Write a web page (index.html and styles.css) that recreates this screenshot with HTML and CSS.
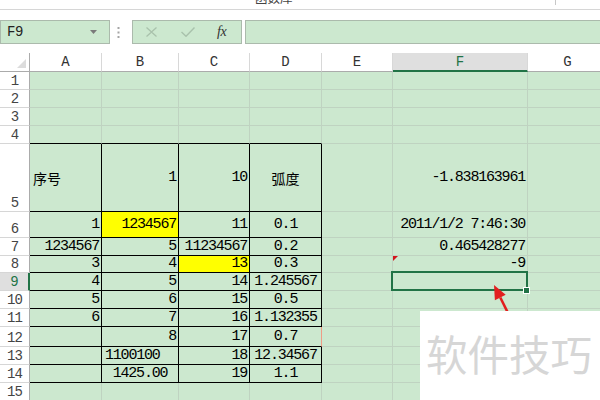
FILE: index.html
```html
<!DOCTYPE html>
<html lang="zh">
<head>
<meta charset="utf-8">
<title>Sheet</title>
<link rel="stylesheet" href="styles.css">
</head>
<body>
<div class="app">
  <div class="ribbon">
    <span class="grp-label">函数库</span>
    <span class="grp-sep"></span>
  </div>
  <div class="fbar">
    <div class="namebox">
      <span class="name">F9</span>
      <svg class="dd" width="7" height="4" viewBox="0 0 7 4"><path d="M0 0H7L3.5 4Z" fill="#7a7a7a"/></svg>
    </div>
    <svg class="dots" width="3" height="11" viewBox="0 0 3 11"><rect x="0.5" y="0" width="2" height="2" fill="#a5a5a5"/><rect x="0.5" y="4.5" width="2" height="2" fill="#a5a5a5"/><rect x="0.5" y="9" width="2" height="2" fill="#a5a5a5"/></svg>
    <div class="fbtns">
      <svg class="x-ic" width="11" height="10" viewBox="0 0 11 10"><path d="M0.5 0.5L10.5 9.5M10.5 0.5L0.5 9.5" stroke="#a9c2ac" stroke-width="1.3" fill="none"/></svg>
      <svg class="ok-ic" width="14" height="10" viewBox="0 0 14 10"><path d="M0.5 5L5 9.3L13.5 0.5" stroke="#a9c2ac" stroke-width="1.4" fill="none"/></svg>
      <span class="fx">fx</span>
    </div>
    <div class="finput"></div>
  </div>
  <div class="sheet">
    <!-- header -->
    <div class="corner"></div>
    <div class="ch">A</div><div class="ch">B</div><div class="ch">C</div><div class="ch">D</div><div class="ch">E</div><div class="ch sel">F</div><div class="ch">G</div>
    <!-- row 1 -->
    <div class="rh">1</div><div class="c"></div><div class="c"></div><div class="c"></div><div class="c"></div><div class="c"></div><div class="c"></div><div class="c"></div>
    <!-- row 2 -->
    <div class="rh">2</div><div class="c"></div><div class="c"></div><div class="c"></div><div class="c"></div><div class="c"></div><div class="c"></div><div class="c"></div>
    <!-- row 3 -->
    <div class="rh">3</div><div class="c"></div><div class="c"></div><div class="c"></div><div class="c"></div><div class="c"></div><div class="c"></div><div class="c"></div>
    <!-- row 4 -->
    <div class="rh">4</div><div class="c tb"></div><div class="c tb"></div><div class="c tb"></div><div class="c tb"></div><div class="c"></div><div class="c"></div><div class="c"></div>
    <!-- row 5 -->
    <div class="rh">5</div>
    <div class="c t l cjk">序号</div>
    <div class="c t r">1</div>
    <div class="c t r">10</div>
    <div class="c t m cjk">弧度</div>
    <div class="c"></div>
    <div class="c r">-1.838163961</div>
    <div class="c"></div>
    <!-- row 6 -->
    <div class="rh">6</div>
    <div class="c t r">1</div>
    <div class="c t r yel">1234567</div>
    <div class="c t r">11</div>
    <div class="c t m">0.1</div>
    <div class="c"></div>
    <div class="c r">2011/1/2 7:46:30</div>
    <div class="c"></div>
    <!-- row 7 -->
    <div class="rh">7</div>
    <div class="c t r">1234567</div>
    <div class="c t r">5</div>
    <div class="c t r">11234567</div>
    <div class="c t m">0.2</div>
    <div class="c"></div>
    <div class="c r">0.465428277</div>
    <div class="c"></div>
    <!-- row 8 -->
    <div class="rh">8</div>
    <div class="c t r">3</div>
    <div class="c t r">4</div>
    <div class="c t r yel">13</div>
    <div class="c t m">0.3</div>
    <div class="c"></div>
    <div class="c r flag">-9</div>
    <div class="c"></div>
    <!-- row 9 -->
    <div class="rh rsel">9</div>
    <div class="c t r">4</div>
    <div class="c t r">5</div>
    <div class="c t r">14</div>
    <div class="c t m">1.245567</div>
    <div class="c"></div>
    <div class="c active"><span class="handle"></span></div>
    <div class="c"></div>
    <!-- row 10 -->
    <div class="rh">10</div>
    <div class="c t r">5</div>
    <div class="c t r">6</div>
    <div class="c t r">15</div>
    <div class="c t m">0.5</div>
    <div class="c"></div><div class="c"></div><div class="c"></div>
    <!-- row 11 -->
    <div class="rh">11</div>
    <div class="c t r">6</div>
    <div class="c t r">7</div>
    <div class="c t r">16</div>
    <div class="c t m">1.132355</div>
    <div class="c"></div><div class="c"></div><div class="c"></div>
    <!-- row 12 -->
    <div class="rh">12</div>
    <div class="c t"></div>
    <div class="c t r">8</div>
    <div class="c t r">17</div>
    <div class="c t m redge">0.7</div>
    <div class="c"></div><div class="c"></div><div class="c"></div>
    <!-- row 13 -->
    <div class="rh">13</div>
    <div class="c t"></div>
    <div class="c t l">1100100</div>
    <div class="c t r">18</div>
    <div class="c t m">12.34567</div>
    <div class="c"></div><div class="c"></div><div class="c"></div>
    <!-- row 14 -->
    <div class="rh">14</div>
    <div class="c t"></div>
    <div class="c t m">1425.00</div>
    <div class="c t r">19</div>
    <div class="c t m">1.1</div>
    <div class="c"></div><div class="c"></div><div class="c"></div>
    <!-- row 15 -->
    <div class="rh">15</div><div class="c"></div><div class="c"></div><div class="c"></div><div class="c"></div><div class="c"></div><div class="c"></div><div class="c"></div>

    <svg class="arrow" width="40" height="40" viewBox="0 0 40 40">
      <path d="M20.3 19.5L27.5 34" stroke="#e21f1f" stroke-width="2.6" fill="none"/>
      <path d="M14 7L25.7 16.8L14.9 22.2Z" fill="#e21f1f"/>
    </svg>
    <div class="watermark">软件技巧</div>
  </div>
</div>
</body>
</html>
```

FILE: styles.css
```css
* {
  box-sizing: border-box;
  margin: 0;
  padding: 0;
}

html, body {
  width: 600px;
  height: 400px;
  overflow: hidden;
  background: #ffffff;
}

body {
  font-family: "Liberation Mono", monospace;
  color: #000;
}

.app {
  width: 600px;
  height: 400px;
  overflow: hidden;
  display: flex;
  flex-direction: column;
}

/* ribbon remnant */
.ribbon {
  flex: none;
  height: 10px;
  border-bottom: 1px solid #d6d6d6;
  display: flex;
  align-items: flex-start;
  padding-left: 255px;
  overflow: hidden;
}

.grp-label {
  font: 12.5px/12px "Noto Sans CJK SC", sans-serif;
  color: #444;
  margin-top: -8px;
  width: 40px;
  white-space: nowrap;
}

.grp-sep {
  width: 1px;
  height: 5px;
  background: #c8c8c8;
  margin-left: 260px;
}

/* formula bar */
.fbar {
  flex: none;
  height: 43px;
  display: flex;
  align-items: flex-start;
  padding-top: 10px;
}

.namebox {
  width: 110px;
  height: 24px;
  border: 1px solid #abbaac;
  background: #cce8cf;
  display: flex;
  align-items: center;
  justify-content: space-between;
  padding-left: 6px;
  padding-right: 12px;
}

.name {
  font-size: 14px;
  color: #222;
  letter-spacing: -0.4px;
}

.dots {
  margin-left: 7px;
  margin-top: 7px;
}

.fbtns {
  width: 110px;
  height: 24px;
  margin-left: 12px;
  border: 1px solid #abbaac;
  background: #cce8cf;
  display: flex;
  align-items: center;
}

.x-ic {
  margin-left: 13px;
}

.ok-ic {
  margin-left: 24px;
}

.fx {
  margin-left: 22px;
  font: italic 14px/14px "Liberation Serif", serif;
  color: #333;
  letter-spacing: -0.5px;
}

.finput {
  flex: 1;
  height: 24px;
  margin-left: 3px;
  margin-right: -2px;
  border: 1px solid #abbaac;
  background: #cce8cf;
}

/* sheet */
.sheet {
  flex: none;
  position: relative;
  display: grid;
  grid-template-columns: 30px 72px 77px 71px 72px 71px 135px 80px;
  grid-template-rows: 19px 18px 18px 18px 18px 68px 26px 18px 17px 18px 18px 18px 20px 18px 18px 18px;
  width: 608px;
}

.corner {
  background: #fff;
  border-right: 1px solid #ababab;
  border-bottom: 1px solid #ababab;
  position: relative;
}

.corner::after {
  content: "";
  position: absolute;
  right: 3px;
  bottom: 3px;
  width: 0;
  height: 0;
  border-left: 9px solid transparent;
  border-bottom: 9px solid #dcdcdc;
}

.ch {
  background: #fff;
  border-right: 1px solid #d8d8d8;
  border-bottom: 1px solid #ababab;
  display: flex;
  align-items: flex-end;
  justify-content: center;
  font-size: 14px;
  line-height: 14px;
  padding-bottom: 2px;
  color: #333;
}

.ch.sel {
  background: #dfdfdf;
  border-bottom: 2px solid #217346;
  color: #217346;
  padding-bottom: 1px;
}

.rh {
  background: #fff;
  border-right: 1px solid #ababab;
  border-bottom: 1px solid #d6d6d6;
  display: flex;
  align-items: flex-end;
  justify-content: center;
  font-size: 14px;
  line-height: 14px;
  padding-bottom: 1px;
  color: #444;
  letter-spacing: -0.8px;
}

.rh.rsel {
  background: #dfdfdf;
  border-right: 2px solid #217346;
  color: #217346;
}

.c {
  background: #cce8cf;
  border-right: 1px solid #bfd3c1;
  border-bottom: 1px solid #bfd3c1;
  display: flex;
  align-items: center;
  white-space: nowrap;
  font-size: 15px;
  line-height: 16px;
  letter-spacing: -1.2px;
  position: relative;
}

.c.t {
  border-right-color: #000;
  border-bottom-color: #000;
}

.c.tb {
  border-bottom-color: #000;
}

.c.r {
  justify-content: flex-end;
  padding-right: 2px;
}

.c.l {
  justify-content: flex-start;
  padding-left: 3px;
}

.c.m {
  justify-content: center;
}

.c.cjk {
  font-family: "Noto Sans CJK SC", sans-serif;
  letter-spacing: 0;
  font-size: 14px;
}

.c.yel {
  background: #ffff00;
}

.c.redge {
  border-right-color: #ef9c86;
}

.c.flag::before {
  content: "";
  position: absolute;
  left: 0;
  top: 0;
  width: 0;
  height: 0;
  border-top: 5px solid #d3141c;
  border-right: 5px solid transparent;
}

.c.active {
  z-index: 2;
}

.c.active::after {
  content: "";
  position: absolute;
  left: -2px;
  top: -2px;
  right: -1px;
  bottom: -1px;
  border: 2px solid #217346;
}

.handle {
  position: absolute;
  left: 130px;
  top: 14px;
  width: 7px;
  height: 7px;
  background: #217346;
  border: 1px solid #fff;
  z-index: 3;
}

.arrow {
  position: absolute;
  left: 480px;
  top: 225px;
  z-index: 4;
}

.watermark {
  position: absolute;
  left: 420px;
  top: 258px;
  width: 190px;
  height: 100px;
  background: #fff;
  z-index: 5;
  font: 41.5px/42px "Noto Sans CJK SC", sans-serif;
  color: #d6d6d6;
  padding-left: 6px;
  padding-top: 21px;
  white-space: nowrap;
}
```
